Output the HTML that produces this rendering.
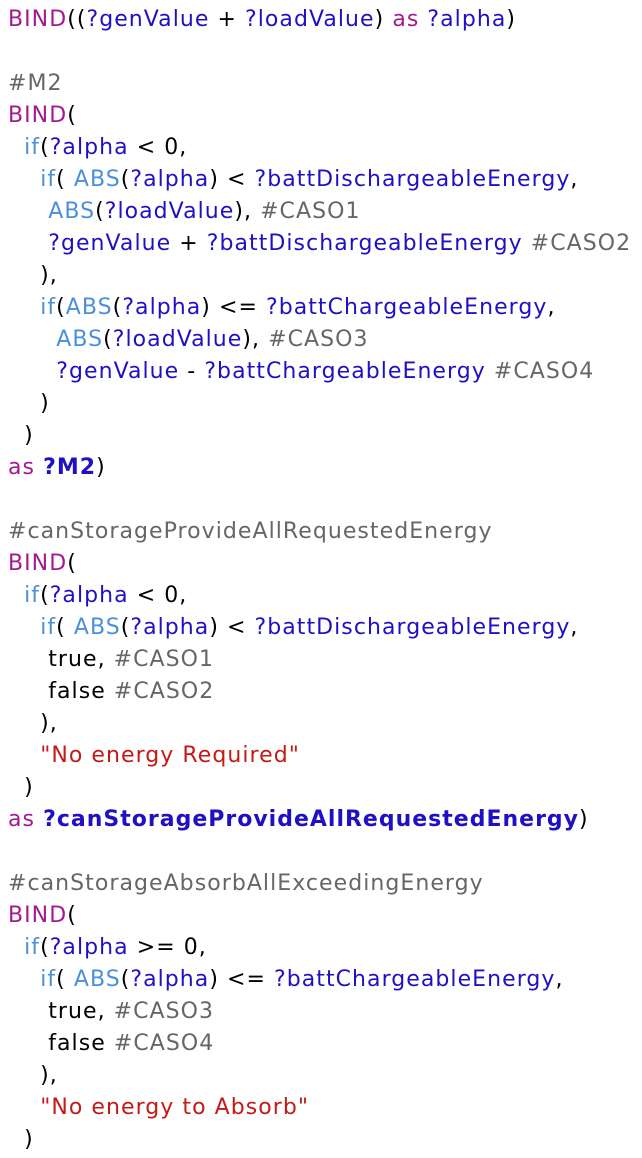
<!DOCTYPE html>
<html><head><meta charset="utf-8"><style>
html,body{margin:0;padding:0;background:#fff;width:642px;height:1158px;overflow:hidden}
pre{margin:0;padding:4px 0 0 8px;font-family:"DejaVu Sans","Liberation Sans",sans-serif;font-size:22px;letter-spacing:1.05px;line-height:32px;color:#000;white-space:pre}
.k{color:#a3198f}.v{color:#1f10c4}.f{color:#4a90d9}.c{color:#666}.s{color:#c41a16}.b{font-weight:bold;letter-spacing:1px}
</style></head><body><pre><span class="k">BIND</span>((<span class="v">?genValue</span> + <span class="v">?loadValue</span>) <span class="k">as</span> <span class="v">?alpha</span>)

<span class="c">#M2</span>
<span class="k">BIND</span>(
  <span class="f">if</span>(<span class="v">?alpha</span> &lt; 0,
    <span class="f">if</span>( <span class="f">ABS</span>(<span class="v">?alpha</span>) &lt; <span class="v">?battDischargeableEnergy</span>,
     <span class="f">ABS</span>(<span class="v">?loadValue</span>), <span class="c">#CASO1</span>
     <span class="v">?genValue</span> + <span class="v">?battDischargeableEnergy</span> <span class="c">#CASO2</span>
    ),
    <span class="f">if</span>(<span class="f">ABS</span>(<span class="v">?alpha</span>) &lt;= <span class="v">?battChargeableEnergy</span>,
      <span class="f">ABS</span>(<span class="v">?loadValue</span>), <span class="c">#CASO3</span>
      <span class="v">?genValue</span> - <span class="v">?battChargeableEnergy</span> <span class="c">#CASO4</span>
    )
  )
<span class="k">as</span> <span class="v b">?M2</span>)

<span class="c">#canStorageProvideAllRequestedEnergy</span>
<span class="k">BIND</span>(
  <span class="f">if</span>(<span class="v">?alpha</span> &lt; 0,
    <span class="f">if</span>( <span class="f">ABS</span>(<span class="v">?alpha</span>) &lt; <span class="v">?battDischargeableEnergy</span>,
     true, <span class="c">#CASO1</span>
     false <span class="c">#CASO2</span>
    ),
    <span class="s">"No energy Required"</span>
  )
<span class="k">as</span> <span class="v b">?canStorageProvideAllRequestedEnergy</span>)

<span class="c">#canStorageAbsorbAllExceedingEnergy</span>
<span class="k">BIND</span>(
  <span class="f">if</span>(<span class="v">?alpha</span> &gt;= 0,
    <span class="f">if</span>( <span class="f">ABS</span>(<span class="v">?alpha</span>) &lt;= <span class="v">?battChargeableEnergy</span>,
     true, <span class="c">#CASO3</span>
     false <span class="c">#CASO4</span>
    ),
    <span class="s">"No energy to Absorb"</span>
  )
</pre></body></html>
